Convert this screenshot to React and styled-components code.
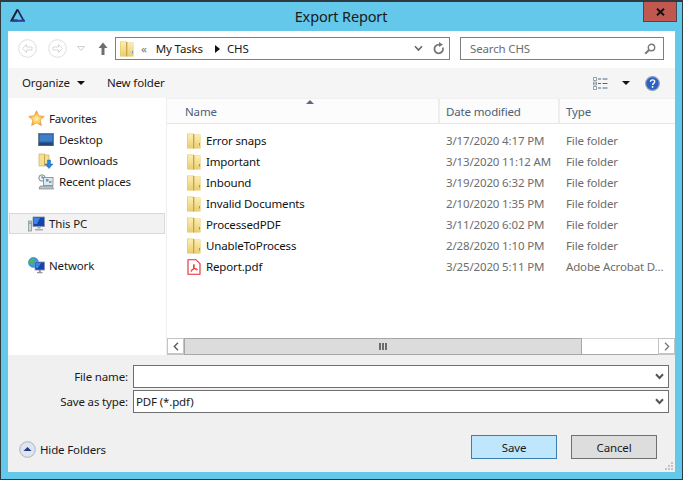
import React from 'react'
import styled, { createGlobalStyle } from 'styled-components'

const GlobalStyle = createGlobalStyle`
  html, body {
    margin: 0;
    padding: 0;
    background: #63c8ea;
  }
  body {
    font-family: "Noto Sans", "Open Sans", sans-serif;
    font-size: 11.5px;
    letter-spacing: -0.15px;
  }
  * {
    box-sizing: border-box;
  }
`

const Win = styled.div`
  width: 683px;
  height: 480px;
  display: flex;
  flex-direction: column;
  background: #63c8ea;
  border: 1px solid #2f3a40;
  border-top-width: 2px;
  padding: 0 7px 7px 7px;
  overflow: hidden;
`

const TitleBar = styled.div`
  height: 29px;
  flex: none;
  display: grid;
  grid-template-columns: 1fr auto 1fr;
  margin-right: -1px;
`

const LogoWrap = styled.div`
  display: flex;
  align-items: center;
  padding: 0 0 2px 2px;
`

const Title = styled.div`
  font-size: 14.5px;
  line-height: 28px;
  color: #1a1a1a;
  padding-right: 2px;
`

const CloseBtn = styled.div`
  justify-self: end;
  width: 34px;
  height: 20px;
  margin-right: -1px;
  background: #c0584f;
  border: 1px solid #4a4a4a;
  border-top: none;
  display: flex;
  align-items: center;
  justify-content: center;
`

const Client = styled.div`
  flex: 1;
  min-height: 0;
  display: flex;
  flex-direction: column;
  background: #fff;
`

const NavBar = styled.div`
  height: 37px;
  flex: none;
  display: flex;
  align-items: center;
  padding: 0 11px 2px 10px;
  background: #fff;
`

const NavButtons = styled.div`
  width: 97px;
  flex: none;
  display: flex;
  align-items: center;
`

const Field = styled.div`
  height: 23px;
  display: flex;
  align-items: center;
  border: 1px solid #7f7f7f;
  background: #fff;
`

const Address = styled(Field)`
  flex: 1;
  padding: 0 4px 0 4px;
  color: #1a1a1a;
`

const Crumb = styled.span`
  margin-left: ${(p) => p.$gap || 0}px;
  line-height: 20px;
  white-space: nowrap;
  color: ${(p) => p.$color || 'inherit'};
`

const Search = styled(Field)`
  width: 204px;
  flex: none;
  margin-left: 10px;
  padding: 0 7px 0 9px;
  justify-content: space-between;
  color: #6d6d6d;
`

const Toolbar = styled.div`
  height: 30px;
  flex: none;
  display: flex;
  align-items: center;
  padding: 0 15px 0 14px;
  background: #f5f5f5;
  color: #1a1a1a;
`

const ToolText = styled.span`
  margin-right: ${(p) => p.$gap || 0}px;
  margin-bottom: 2px;
`

const Spacer = styled.div`
  flex: 1;
`

const Main = styled.div`
  flex: 1;
  min-height: 0;
  display: flex;
`

const Sidebar = styled.div`
  width: 159px;
  flex: none;
  padding-top: 10px;
  border-right: 1px solid #efefef;
  color: #1a1a1a;
`

const NavItem = styled.div`
  height: 21px;
  margin: ${(p) => p.$top || 0}px 1px 0 1px;
  display: flex;
  align-items: center;
  gap: ${(p) => (p.$child ? 5 : 4)}px;
  padding-left: ${(p) => (p.$child ? 28 : 18)}px;
  border: 1px solid ${(p) => (p.$selected ? '#d9d9d9' : 'transparent')};
  background: ${(p) => (p.$selected ? '#f2f2f2' : 'transparent')};
`

const FilePane = styled.div`
  flex: 1;
  min-width: 0;
  display: flex;
  flex-direction: column;
`

const HeaderRow = styled.div`
  height: 26px;
  flex: none;
  display: grid;
  grid-template-columns: 273px 120px 1fr;
  background: #fcfcfc;
  border-top: 1px solid #f0f0f0;
  border-bottom: 1px solid #e5e5e5;
  color: #4c607a;
`

const HeaderCell = styled.div`
  position: relative;
  padding: 5px 0 0 ${(p) => p.$pad || 6}px;
  border-right: ${(p) => (p.$last ? 'none' : '2px solid #eeeeee')};
`

const SortMark = styled.div`
  position: absolute;
  left: 139px;
  top: 1px;
  width: 0;
  height: 0;
  border-left: 4px solid transparent;
  border-right: 4px solid transparent;
  border-bottom: 4px solid #5d6b7c;
`

const Rows = styled.div`
  flex: 1;
  min-height: 0;
  padding-top: 6px;
`

const Row = styled.div`
  height: 21px;
  display: grid;
  grid-template-columns: 272px 120px 1fr;
  align-items: center;
  white-space: nowrap;
`

const NameCell = styled.div`
  display: flex;
  align-items: center;
  gap: 5px;
  padding-left: 20px;
  color: #111;
`

const MetaCell = styled.div`
  padding-left: 7px;
  color: #6d6d6d;
  overflow: hidden;
`

const HScroll = styled.div`
  height: 17px;
  flex: none;
  display: flex;
  background: #fff;
`

const ScrollArrow = styled.div`
  width: 17px;
  flex: none;
  display: flex;
  align-items: center;
  justify-content: center;
  border: 1px solid #c4c4c4;
  border-bottom-width: 2px;
`

const ScrollThumb = styled.div`
  width: 398px;
  flex: none;
  display: flex;
  align-items: center;
  justify-content: center;
  gap: 1px;
  background: #dcdcdc;
  border: 1px solid #a6a6a6;
`

const Grip = styled.span`
  width: 2px;
  height: 7px;
  background: #6b6b6b;
`

const ScrollTrack = styled.div`
  flex: 1;
  border-top: 1px solid #d6d6d6;
  border-bottom: 1px solid #a6a6a6;
`

const Bottom = styled.div`
  position: relative;
  height: 117px;
  flex: none;
  background: #f0f0f0;
  padding: 10px 6px 0 0;
  color: #1a1a1a;
`

const FormRow = styled.div`
  display: grid;
  grid-template-columns: 120px 1fr;
  column-gap: 5px;
  align-items: center;
  margin-bottom: 2px;
`

const Label = styled.label`
  text-align: right;
`

const ComboBox = styled.div`
  height: 23px;
  display: flex;
  align-items: center;
  justify-content: space-between;
  padding: 0 4px 0 2px;
  background: #fff;
  border: 1px solid #6f6f6f;
`

const Footer = styled.div`
  display: flex;
  align-items: center;
  margin-top: 22px;
  padding-left: 11px;
`

const HideFolders = styled.div`
  display: flex;
  align-items: center;
  gap: 4px;
  flex: 1;
  margin-top: 4px;
`

const DlgButton = styled.div`
  width: 86px;
  height: 24px;
  margin-left: 14px;
  display: flex;
  align-items: center;
  justify-content: center;
  background: ${(p) => (p.$primary ? '#bee6fd' : '#dddddd')};
  border: 1px solid ${(p) => (p.$primary ? '#3c7fb1' : '#707070')};
`

const ButtonEnd = styled.span`
  width: 12px;
  flex: none;
`

const SizeGrip = styled.svg`
  position: absolute;
  right: 2px;
  bottom: 2px;
`

const Caret = styled.div`
  width: 0;
  height: 0;
  border-left: 4px solid transparent;
  border-right: 4px solid transparent;
  border-top: 4px solid #111;
  margin-left: ${(p) => p.$left || 0}px;
  margin-right: ${(p) => p.$right || 0}px;
`

const RoundNavSvg = styled.svg`
  flex: none;
  margin-right: ${(p) => p.$right || 0}px;
  transform: ${(p) => (p.$flip ? 'scaleX(-1)' : 'none')};
`

const NavDrop = styled.svg`
  flex: none;
  margin-left: 10px;
`

const UpArrow = styled.svg`
  flex: none;
  margin-left: 13px;
`

const IconSvg = styled.svg`
  flex: none;
  margin-left: ${(p) => p.$left || 0}px;
`

function FolderIcon() {
  return (
    <IconSvg width="14" height="16" viewBox="0 0 14 16">
      <defs>
        <linearGradient id="folderFace" x1="0" y1="0" x2="0" y2="1">
          <stop offset="0%" stopColor="#fbeeb4" />
          <stop offset="100%" stopColor="#e9cd72" />
        </linearGradient>
      </defs>
      <path d="M0 0.5h6.500l1 1h6v14H0z" fill="#e8cb6d" />
      <path d="M0.700 1.200h5.300v14H0.700z" fill="url(#folderFace)" />
      <path d="M7.500 2l5.800-.2v13.200l-5.800.3z" fill="url(#folderFace)" />
      <path d="M6.600 1v14.500" stroke="#c7a548" strokeWidth="1.200" />
      <path d="M12.500 10v2.500" stroke="#4ea5e0" strokeWidth="1" />
    </IconSvg>
  )
}

function PdfIcon() {
  return (
    <IconSvg width="14" height="16" viewBox="0 0 14 16">
      <path d="M1 0.700h8l4 4v10.600H1z" fill="#fff" stroke="#e8272a" strokeWidth="1.100" />
      <path d="M7 5.500c-.8 0-.6 2 .3 3.600.6 1 2.200 2.200 3 1.600.6-.6-1-1.400-3.300-.9-1.500.3-3.300 1.500-3.100 2.300.3.800 2-1 2.700-3 .5-1.400 1-3.600.4-3.600z" fill="none" stroke="#e8272a" strokeWidth="1" />
    </IconSvg>
  )
}

function StarIcon() {
  return (
    <IconSvg width="17" height="17" viewBox="0 0 17 17">
      <defs>
        <radialGradient id="starFill" cx="50%" cy="55%" r="55%">
          <stop offset="0%" stopColor="#fff3a8" />
          <stop offset="60%" stopColor="#fcc34f" />
          <stop offset="100%" stopColor="#f08a2a" />
        </radialGradient>
      </defs>
      <path d="M8.500 .8l2.300 5 5.400.6-4 3.700 1.100 5.400-4.800-2.700-4.800 2.700 1.100-5.400-4-3.700 5.400-.6z" fill="url(#starFill)" stroke="#ee9a3d" strokeWidth="0.800" />
    </IconSvg>
  )
}

function DesktopIcon() {
  return (
    <IconSvg width="16" height="14" viewBox="0 0 16 14">
      <rect x="0.500" y="0.500" width="15" height="12" fill="#2a5a9e" stroke="#6f7f90" />
      <rect x="1.500" y="1.500" width="13" height="7" fill="#3f7fc8" />
      <rect x="1" y="10" width="14" height="2.500" fill="#24476f" />
    </IconSvg>
  )
}

function DownloadsIcon() {
  return (
    <IconSvg width="16" height="16" viewBox="0 0 16 16">
      <path d="M1 1h6l1 1h3v11H1z" fill="#f4df92" stroke="#c9b063" strokeWidth="0.700" />
      <path d="M6.500 2v11" stroke="#c7a548" />
      <path d="M9.500 7h3v4h2.500l-4 4.500-4-4.500h2.500z" fill="#2a86d8" stroke="#1d69b5" strokeWidth="0.500" />
    </IconSvg>
  )
}

function RecentIcon() {
  return (
    <IconSvg width="16" height="16" viewBox="0 0 16 16">
      <circle cx="4" cy="4" r="3.200" fill="#f1f4f6" stroke="#7c8790" />
      <path d="M4 2v2h2" fill="none" stroke="#4c5760" strokeWidth="0.800" />
      <rect x="5.500" y="3.500" width="9.500" height="8" fill="#dfe8ee" stroke="#7c8790" strokeWidth="0.800" />
      <rect x="8" y="5" width="2.500" height="2.500" fill="#4f9ad8" />
      <rect x="11" y="7" width="2.500" height="2" fill="#79b06a" />
      <path d="M2 12h12.500l1 3H1z" fill="#b8c2c8" stroke="#7c8790" strokeWidth="0.700" />
    </IconSvg>
  )
}

function PcIcon() {
  return (
    <IconSvg width="17" height="16" viewBox="0 0 17 16">
      <rect x="0.500" y="5" width="3" height="10" fill="#cfd8d2" stroke="#7c8a80" strokeWidth="0.700" />
      <rect x="1.300" y="6.500" width="1.400" height="1.500" fill="#58b848" />
      <rect x="5" y="1" width="11.500" height="9.500" fill="#1443b0" stroke="#8796a8" strokeWidth="0.800" />
      <path d="M6 2h6l-3 6H6z" fill="#3f83e6" />
      <path d="M9.500 10.500h3v2h-3zM7 13h8v1.500H7z" fill="#a3adb6" />
    </IconSvg>
  )
}

function NetworkIcon() {
  return (
    <IconSvg width="17" height="17" viewBox="0 0 17 17">
      <circle cx="5.500" cy="5.500" r="5" fill="#3a9be0" stroke="#2c78b4" strokeWidth="0.600" />
      <path d="M2 3.500c1.500-1.500 3-2 4-1.500l.5 2-2 1 .5 2-1.500 1-2-2z" fill="#4fb848" />
      <rect x="7" y="5" width="9.500" height="8" fill="#1443b0" stroke="#8796a8" strokeWidth="0.800" />
      <path d="M8 6h5l-3 5H8z" fill="#3f83e6" />
      <path d="M10.800 13h2v2h-2zM9 15h5.500v1.300H9z" fill="#8b97a1" />
    </IconSvg>
  )
}

function RoundNav({ flip, right }) {
  return (
    <RoundNavSvg width="19" height="19" viewBox="0 0 19 19" $flip={flip} $right={right}>
      <circle cx="9.500" cy="9.500" r="8.800" fill="#fff" stroke="#dedede" />
      <path d="M4.500 9.500l4-4v2.500h5.500v3H8.500v2.500z" fill="none" stroke="#d8d8d8" />
    </RoundNavSvg>
  )
}

function Logo() {
  return (
    <svg width="16" height="15" viewBox="0 0 16 15">
      <path d="M7.500 1.500l-6 11h6" fill="none" stroke="#1b1f2c" strokeWidth="2" />
      <path d="M7.500 1.500l6 11" fill="none" stroke="#22265a" strokeWidth="1.600" />
      <path d="M2 12.800h13" stroke="#2d3f9a" strokeWidth="2" />
    </svg>
  )
}

function Chevron({ color = '#666', width = 1.6 }) {
  return (
    <IconSvg width="9" height="7" viewBox="0 0 9 7">
      <path d="M1 1.200l3.500 3.800 3.500-3.800" fill="none" stroke={color} strokeWidth={width} />
    </IconSvg>
  )
}

const folders = [
  ['Error snaps', '3/17/2020 4:17 PM'],
  ['Important', '3/13/2020 11:12 AM'],
  ['Inbound', '3/19/2020 6:32 PM'],
  ['Invalid Documents', '2/10/2020 1:35 PM'],
  ['ProcessedPDF', '3/11/2020 6:02 PM'],
  ['UnableToProcess', '2/28/2020 1:10 PM'],
]

export default function App() {
  return (
    <>
      <GlobalStyle />
      <Win>
        <TitleBar>
          <LogoWrap>
            <Logo />
          </LogoWrap>
          <Title>Export Report</Title>
          <CloseBtn>
            <svg width="9" height="8" viewBox="0 0 9 8">
              <path d="M1 .8l7 6.400M8 .8L1 7.200" stroke="#111" strokeWidth="2" />
            </svg>
          </CloseBtn>
        </TitleBar>
        <Client>
          <NavBar>
            <NavButtons>
              <RoundNav right={11} />
              <RoundNav flip />
              <NavDrop width="8" height="5" viewBox="0 0 8 5">
                <path d="M.5.500h7L4 4.500z" fill="none" stroke="#cfcfcf" />
              </NavDrop>
              <UpArrow width="10" height="13" viewBox="0 0 10 13">
                <path d="M5 .5l4.500 5.500H6.500v7h-3V6H.5z" fill="#6e6e6e" />
              </UpArrow>
            </NavButtons>
            <Address>
              <FolderIcon />
              <Crumb $gap={7} $color="#777">«</Crumb>
              <Crumb $gap={9}>My Tasks</Crumb>
              <IconSvg width="5" height="8" viewBox="0 0 5 8" $left={12}>
                <path d="M0 0l5 4-5 4z" fill="#111" />
              </IconSvg>
              <Crumb $gap={7}>CHS</Crumb>
              <Spacer />
              <Chevron />
              <IconSvg width="12" height="13" viewBox="0 0 12 13" $left={10}>
                <path d="M9.800 5.500A4.300 4.300 0 1 1 6 2.700" fill="none" stroke="#777" strokeWidth="1.800" />
                <path d="M6 0l4 2.800L6 5z" fill="#777" />
              </IconSvg>
            </Address>
            <Search>
              <span>Search CHS</span>
              <svg width="12" height="12" viewBox="0 0 12 12">
                <circle cx="7.500" cy="4.500" r="3.200" fill="none" stroke="#7a7a7a" strokeWidth="1.400" />
                <path d="M5 7L1.200 10.800" stroke="#7a7a7a" strokeWidth="2" />
              </svg>
            </Search>
          </NavBar>
          <Toolbar>
            <ToolText $gap={7}>Organize</ToolText>
            <Caret $right={22} />
            <ToolText>New folder</ToolText>
            <Spacer />
            <svg width="15" height="13" viewBox="0 0 15 13">
              <path d="M.5.500h3v3h-3zM.5 5h3v3h-3zM.5 9.500h3v3h-3z" fill="#fff" stroke="#7a8794" strokeWidth="0.800" />
              <rect x="1.500" y="6" width="1" height="1" fill="#d33" />
              <path d="M5 2h3M9.500 2h5M5 6.500h3M9.500 6.500h5M5 11h3M9.500 11h5" stroke="#4c6a8c" />
            </svg>
            <Caret $left={14} $right={15} />
            <svg width="15" height="15" viewBox="0 0 15 15">
              <circle cx="7.500" cy="7.500" r="6.800" fill="#2a62c4" stroke="#8a9bb8" strokeWidth="1.200" />
              <path d="M5.500 5.800c0-2.600 4.200-2.600 4.200-.1 0 1.600-2.100 1.700-2.100 3.300" fill="none" stroke="#fff" strokeWidth="1.400" />
              <rect x="6.800" y="10" width="1.600" height="1.700" fill="#fff" />
            </svg>
          </Toolbar>
          <Main>
            <Sidebar>
              <NavItem>
                <StarIcon />
                Favorites
              </NavItem>
              <NavItem $child>
                <DesktopIcon />
                Desktop
              </NavItem>
              <NavItem $child>
                <DownloadsIcon />
                Downloads
              </NavItem>
              <NavItem $child>
                <RecentIcon />
                Recent places
              </NavItem>
              <NavItem $selected $top={21}>
                <PcIcon />
                This PC
              </NavItem>
              <NavItem $top={21}>
                <NetworkIcon />
                Network
              </NavItem>
            </Sidebar>
            <FilePane>
              <HeaderRow>
                <HeaderCell $pad={18}>
                  Name
                  <SortMark />
                </HeaderCell>
                <HeaderCell>Date modified</HeaderCell>
                <HeaderCell $last>Type</HeaderCell>
              </HeaderRow>
              <Rows>
                {folders.map(([name, date]) => (
                  <Row key={name}>
                    <NameCell>
                      <FolderIcon />
                      {name}
                    </NameCell>
                    <MetaCell>{date}</MetaCell>
                    <MetaCell>File folder</MetaCell>
                  </Row>
                ))}
                <Row>
                  <NameCell>
                    <PdfIcon />
                    Report.pdf
                  </NameCell>
                  <MetaCell>3/25/2020 5:11 PM</MetaCell>
                  <MetaCell>Adobe Acrobat D...</MetaCell>
                </Row>
              </Rows>
              <HScroll>
                <ScrollArrow>
                  <svg width="6" height="9" viewBox="0 0 6 9">
                    <path d="M5 .8L1.300 4.500 5 8.200" fill="none" stroke="#555" strokeWidth="1.300" />
                  </svg>
                </ScrollArrow>
                <ScrollThumb>
                  <Grip />
                  <Grip />
                  <Grip />
                </ScrollThumb>
                <ScrollTrack />
                <ScrollArrow>
                  <svg width="6" height="9" viewBox="0 0 6 9">
                    <path d="M1 .8l3.700 3.700L1 8.200" fill="none" stroke="#777" strokeWidth="1.300" />
                  </svg>
                </ScrollArrow>
              </HScroll>
            </FilePane>
          </Main>
          <Bottom>
            <FormRow>
              <Label>File name:</Label>
              <ComboBox>
                <span />
                <Chevron color="#555" width={2} />
              </ComboBox>
            </FormRow>
            <FormRow>
              <Label>Save as type:</Label>
              <ComboBox>
                <span>PDF (*.pdf)</span>
                <Chevron color="#555" width={2} />
              </ComboBox>
            </FormRow>
            <Footer>
              <HideFolders>
                <svg width="17" height="17" viewBox="0 0 17 17">
                  <circle cx="8.500" cy="8.500" r="7.800" fill="#dfe5ee" stroke="#a9b3c2" />
                  <path d="M4.500 10l4-4 4 4z" fill="#1f3a80" />
                </svg>
                Hide Folders
              </HideFolders>
              <DlgButton $primary>Save</DlgButton>
              <DlgButton>Cancel</DlgButton>
              <ButtonEnd />
            </Footer>
            <SizeGrip width="8" height="8" viewBox="0 0 8 8">
              <path d="M6 0h2v2H6zM3 3h2v2H3zM6 3h2v2H6zM0 6h2v2H0zM3 6h2v2H3zM6 6h2v2H6z" fill="#c4c4c4" />
            </SizeGrip>
          </Bottom>
        </Client>
      </Win>
    </>
  )
}
